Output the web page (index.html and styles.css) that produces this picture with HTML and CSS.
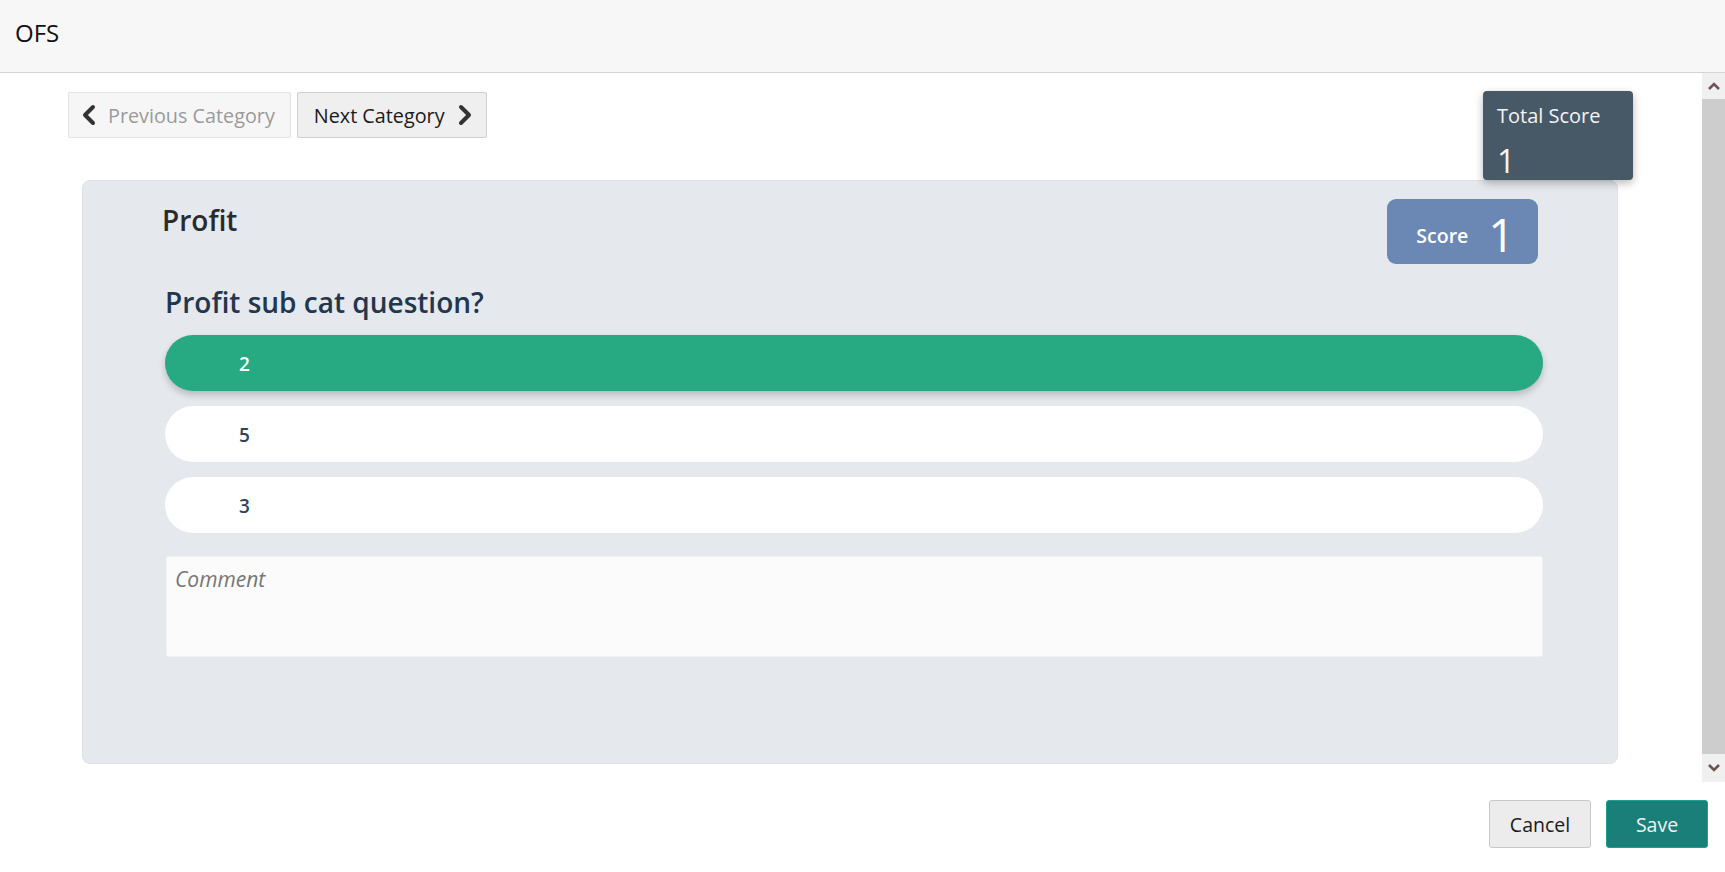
FILE: index.html
```html
<!DOCTYPE html>
<html lang="en">
<head>
<meta charset="utf-8">
<title>OFS</title>
<link rel="stylesheet" href="styles.css">
</head>
<body>
<header class="topbar">OFS</header>
<div class="viewport">
  <main class="main">
    <div class="nav">
      <button class="nav-btn nav-btn--disabled">
        <svg class="chev" width="16" height="22" viewBox="0 0 16 22"><polyline points="12,3 4,11 12,19" fill="none" stroke="#333" stroke-width="4" stroke-linecap="round" stroke-linejoin="round"/></svg>
        <span>Previous Category</span>
      </button>
      <button class="nav-btn">
        <span>Next Category</span>
        <svg class="chev" width="16" height="22" viewBox="0 0 16 22"><polyline points="4,3 12,11 4,19" fill="none" stroke="#333" stroke-width="4" stroke-linecap="round" stroke-linejoin="round"/></svg>
      </button>
    </div>
    <div class="total">
      <div class="total-label">Total Score</div>
      <div class="total-value">1</div>
    </div>
    <section class="card">
      <div class="card-head">
        <h2 class="card-title">Profit</h2>
        <div class="score"><span class="score-label">Score</span><span class="score-value">1</span></div>
      </div>
      <div class="question">
        <h3 class="question-title">Profit sub cat question?</h3>
        <div class="options">
          <div class="option option--selected">2</div>
          <div class="option">5</div>
          <div class="option">3</div>
        </div>
        <textarea class="comment" placeholder="Comment"></textarea>
      </div>
    </section>
  </main>
  <div class="scrollbar">
    <div class="sb-btn"><svg width="14" height="10" viewBox="0 0 14 10"><polyline points="2,8 7,3 12,8" fill="none" stroke="#6e5252" stroke-width="2.6"/></svg></div>
    <div class="sb-track"></div>
    <div class="sb-btn sb-btn--down"><svg width="14" height="10" viewBox="0 0 14 10"><polyline points="2,2 7,7 12,2" fill="none" stroke="#6e5252" stroke-width="2.6"/></svg></div>
  </div>
</div>
<footer class="footer">
  <button class="btn btn--cancel">Cancel</button>
  <button class="btn btn--save">Save</button>
</footer>
</body>
</html>
```
FILE: styles.css
```css
* { box-sizing: border-box; }
html, body { margin: 0; padding: 0; }
body {
  font-family: "Open Sans", "Noto Sans", sans-serif;
  background: #fff;
  color: #222;
  width: 1725px;
  height: 872px;
  overflow: hidden;
}
.topbar {
  height: 73px;
  background: #f7f7f7;
  border-bottom: 1px solid #d4d4d4;
  font-size: 24px;
  padding: 16px 0 0 15px;
  color: #111;
}
.viewport {
  display: flex;
  height: 709px;
}
.main {
  position: relative;
  flex: 1;
  padding: 19px 0 0 0;
}
.nav {
  display: flex;
  gap: 6px;
  padding-left: 68px;
}
.nav-btn {
  display: flex;
  align-items: center;
  gap: 12px;
  height: 46px;
  padding: 0 13px 0 16px;
  font-family: inherit;
  font-size: 19.8px;
  color: #1a1a1a;
  background: #efefef;
  border: 1px solid #cfcfcf;
  border-radius: 2px;
}
.nav-btn--disabled {
  background: #f6f6f6;
  border-color: #e3e3e3;
  color: #9a9a9a;
  padding: 0 15px 0 12px;
  gap: 11px;
}
.total {
  position: absolute;
  top: 18px;
  right: 69px;
  width: 150px;
  height: 89px;
  background: #475966;
  border-radius: 4px;
  box-shadow: 0 3px 8px rgba(0,0,0,0.28);
  color: #f4f4f4;
  padding: 12px 0 0 14px;
  z-index: 2;
}
.total-label { font-size: 20px; line-height: 26px; }
.total-value { font-size: 32px; margin-top: 16px; font-weight: 400; line-height: 32px; }
.card {
  margin: 42px 84px 0 82px;
  height: 584px;
  background: #e5e8ed;
  border: 1px solid #dde0e5;
  border-radius: 8px;
  padding: 18px 67px 0 67px;
}
.card-head {
  display: flex;
  justify-content: space-between;
  align-items: flex-start;
  padding: 0 12px 0 12px;
}
.card-title {
  margin: 0;
  font-size: 28px;
  font-weight: 600;
  color: #2b2b2b;
  line-height: 36px;
  padding-top: 3px;
}
.score {
  display: flex;
  align-items: center;
  justify-content: center;
  gap: 20px;
  width: 151px;
  height: 65px;
  background: #6b87b4;
  border-radius: 9px;
  color: #fff;
  padding: 5px 0 0 6px;
}
.score-label { font-size: 19.5px; font-weight: 600; padding-top: 2px; }
.score-value { font-size: 46px; line-height: 50px; font-weight: 500; }
.question {
  margin-top: 16px;
  border-radius: 12px;
  padding: 0 7px 0 15px;
}
.question-title {
  margin: 0;
  font-size: 28px;
  font-weight: 600;
  color: #22364e;
  line-height: 36px;
  padding: 4px 0 15px 0;
}
.options {
  display: flex;
  flex-direction: column;
  gap: 15px;
}
.option {
  height: 56px;
  border-radius: 28px;
  background: #fff;
  padding: 2px 0 0 74px;
  display: flex;
  align-items: center;
  font-size: 19px;
  font-weight: 600;
  color: #2c4660;
}
.option--selected {
  background: #27a982;
  color: #fff;
  box-shadow: 0 4px 7px rgba(0,0,0,0.2);
}
.comment {
  display: block;
  width: 1377px;
  height: 101px;
  margin: 23px 0 0 1px;
  background: #fbfbfb;
  border: 1px solid #f0f1f3;
  border-radius: 2px;
  resize: none;
  font-family: inherit;
  font-size: 21px;
  padding: 8px 8px;
}
.comment::placeholder { color: #757575; font-style: italic; }
.scrollbar {
  width: 24px;
  display: flex;
  flex-direction: column;
}
.sb-btn {
  height: 26px;
  background: #f0f0f0;
  display: flex;
  align-items: center;
  justify-content: center;
}
.sb-btn--down { height: 28px; }
.sb-track { flex: 1; background: #cdcdcd; }
.footer {
  height: 90px;
  display: flex;
  justify-content: flex-end;
  align-items: flex-start;
  gap: 15px;
  padding: 18px 17px 0 0;
}
.btn {
  width: 102px;
  height: 48px;
  font-family: inherit;
  font-size: 19.5px;
  border-radius: 3px;
}
.btn--cancel {
  background: #ececec;
  border: 1px solid #c9c9c9;
  color: #1a1a1a;
}
.btn--save {
  background: #1b7f79;
  border: 1px solid #19a08f;
  color: #f2f2f2;
}
```
